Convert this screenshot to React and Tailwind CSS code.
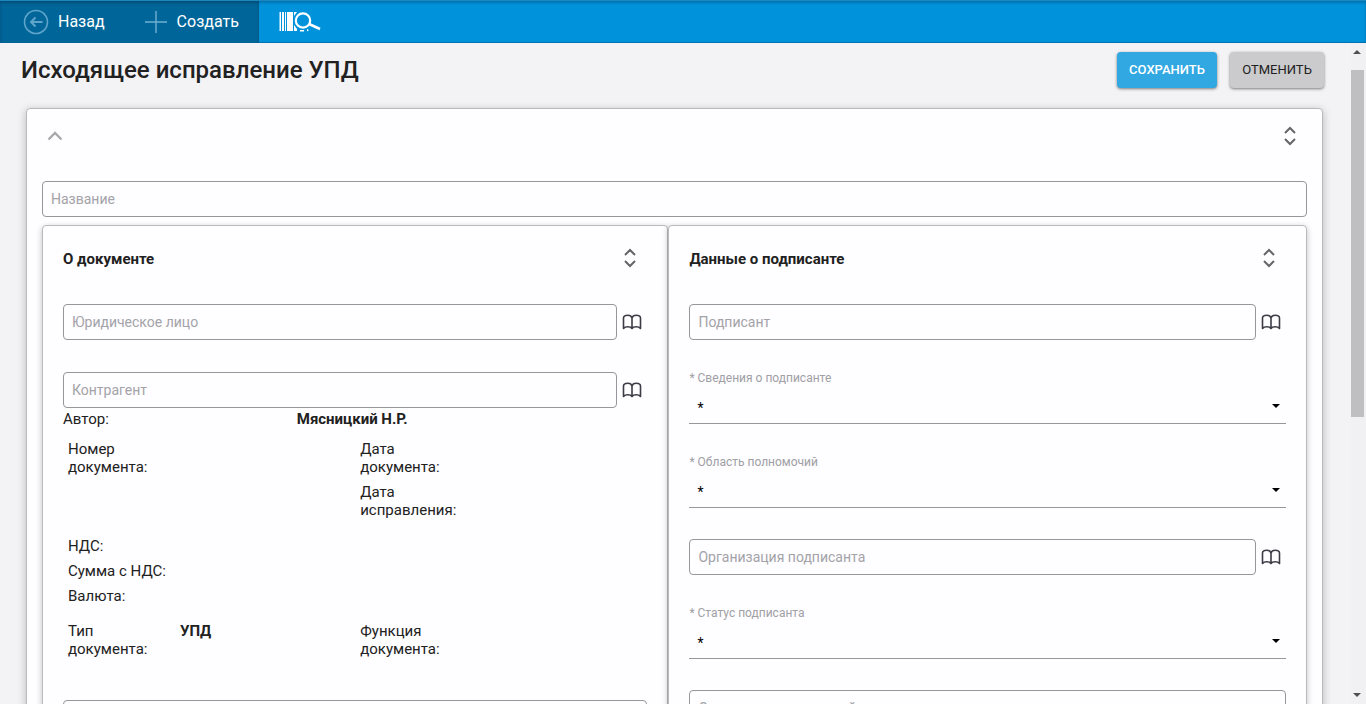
import React, { useState } from 'react';

const DETAILS = 'text-[15px] leading-[18px]';

const SELECTS = {
  info: { id: 'signer-info', label: '* Сведения о подписанте' },
  scope: { id: 'signer-scope', label: '* Область полномочий' },
  status: { id: 'signer-status', label: '* Статус подписанта' },
};

function BackIcon() {
  return (
    <svg width="26" height="26" viewBox="0 0 26 26" fill="none" stroke="#5fa5cb" aria-hidden="true">
      <circle cx="13" cy="13" r="11.5" strokeWidth="1.6" />
      <path d="M19.5 13H8M12.5 8.5 8 13l4.5 4.5" strokeWidth="2" />
    </svg>
  );
}

function PlusIcon() {
  return (
    <svg width="22" height="22" viewBox="0 0 22 22" stroke="#6fb0d2" strokeWidth="1.4" aria-hidden="true">
      <path d="M11 0v22M0 11h22" />
    </svg>
  );
}

// Barcode with a magnifier over its right side
function Logo() {
  return (
    <svg width="42" height="22" viewBox="0 0 42 22" fill="#fff" aria-hidden="true">
      <rect x="0.5" y="1" width="1.5" height="19" />
      <rect x="3" y="1" width="2" height="19" />
      <rect x="6" y="1" width="1" height="19" />
      <rect x="8" y="1" width="6" height="19" />
      <path d="M15 1h3l-3 4zM15 14l3 4v2h-3z" />
      <circle cx="24" cy="9.5" r="7.2" fill="none" stroke="#fff" strokeWidth="2.2" />
      <path d="M30 13l11 5" stroke="#fff" strokeWidth="2.6" />
      <path d="M21 19h4v1.5h-4zM28 18l2 1-2 1.500z" />
    </svg>
  );
}

function UnfoldIcon() {
  return (
    <svg width="24" height="24" viewBox="0 0 24 24" fill="none" stroke="#66666a" strokeWidth="2" aria-hidden="true">
      <path d="M7 9l5-5 5 5M7 15l5 5 5-5" />
    </svg>
  );
}

function BookIcon() {
  return (
    <svg width="20" height="16" viewBox="0 0 20 16" fill="none" stroke="#3c3c46" strokeWidth="1.6" strokeLinejoin="round" aria-hidden="true">
      <path d="M10 4C9.500 2 8 1.200 5.800 1.200S1.500 2.200 1.500 4v10.500C2.500 13.200 4 12.700 5.800 12.700S9.200 13.200 10 14.500c.8-1.300 2.400-1.800 4.200-1.800s3.300.5 4.300 1.800V4c0-1.800-2.100-2.800-4.300-2.800S10.500 2 10 4zM10 4v10" />
    </svg>
  );
}

function TextField({ label, lookup }) {
  return (
    <div className="flex items-center gap-[5px]">
      <input
        type="text"
        aria-label={label}
        placeholder={label}
        className="h-9 min-w-0 flex-1 rounded border border-[#96969b] bg-transparent px-2 text-sm text-[#212121] outline-none placeholder:text-[#a3a3a8] focus:border-[#0093dc]"
      />
      {lookup && (
        <button type="button" aria-label={`Выбрать: ${label}`} className="flex h-9 w-[25px] items-center">
          <BookIcon />
        </button>
      )}
    </div>
  );
}

function SelectField({ id, label }) {
  return (
    <div>
      <label htmlFor={id} className="block text-xs leading-4 text-[#a0a0a5]">{label}</label>
      <div className="relative mt-1">
        <select id={id} className="h-[34px] w-full appearance-none border-b border-[#96969b] bg-transparent px-2 pt-0.5 text-sm text-black outline-none">
          <option>*</option>
        </select>
        <svg width="8" height="4" viewBox="0 0 8 4" className="pointer-events-none absolute top-[14px] right-[6px]" aria-hidden="true">
          <path d="M0 0h8L4 4z" />
        </svg>
      </div>
    </div>
  );
}

function Panel({ title, className, children }) {
  return (
    <section className={`rounded border border-[#b9b9be] bg-[#fefdff] px-5 shadow-[0_2px_6px_rgba(0,0,0,0.25)] ${className}`}>
      <div className="flex h-16 items-center justify-between pr-[5px]">
        <h2 className="pt-0.5 text-[15px] font-bold">{title}</h2>
        <button type="button" aria-label={`Свернуть: ${title}`}>
          <UnfoldIcon />
        </button>
      </div>
      {children}
    </section>
  );
}

export default function App() {
  const [open, setOpen] = useState(true);

  return (
    <div className="flex h-screen flex-col overflow-hidden bg-[#f3f2f5] font-['Roboto','Liberation_Sans',sans-serif] text-[#212121]">
      <header className="flex h-[43px] shrink-0 border-t border-[#1b87bd] bg-[#0093dc] text-white shadow-[inset_0_2px_3px_rgba(0,40,80,0.3),inset_0_-1px_1px_rgba(0,40,80,0.3)]">
        <nav className="flex items-center gap-10 bg-[#006699] pr-5 pl-[23px] text-base shadow-[inset_0_2px_3px_rgba(0,30,60,0.35)]">
          <button type="button" className="flex items-center gap-[9px]">
            <BackIcon />
            Назад
          </button>
          <button type="button" className="flex items-center gap-[10px]">
            <PlusIcon />
            Создать
          </button>
        </nav>
        <a href="#" aria-label="Поиск по штрихкоду" className="flex items-center px-5">
          <Logo />
        </a>
      </header>

      <div className="flex min-h-0 flex-1">
        <main className="min-w-0 flex-1 overflow-hidden pr-7 pl-[26px]">
          <div className="-mr-px -ml-[5px] flex h-[65px] items-start justify-between">
            <h1 className="pt-[11px] text-2xl leading-8 font-medium">Исходящее исправление УПД</h1>
            <div className="flex gap-[13px] pt-[9px] text-[13px]">
              <button type="button" className="h-9 w-[100px] rounded bg-[#31a8e2] font-medium text-white shadow-[0_1px_3px_rgba(0,0,0,0.5)]">
                СОХРАНИТЬ
              </button>
              <button type="button" className="h-9 w-[94px] rounded bg-[#cbcacc] text-[#212121] shadow-[0_1px_3px_rgba(0,0,0,0.5)]">
                ОТМЕНИТЬ
              </button>
            </div>
          </div>

          <div className="rounded border border-[#b9b9be] bg-[#fefdff] px-[15px] pb-6 shadow-[0_2px_8px_rgba(0,0,0,0.25)]">
            <div className="flex h-[54px] items-center justify-between pr-[5px] pl-px">
              <button type="button" aria-label="Свернуть раздел" onClick={() => setOpen(!open)}>
                <svg width="24" height="24" viewBox="0 0 24 24" fill="none" stroke="#a9a9ad" strokeWidth="2.4" aria-hidden="true">
                  <path d="m5.500 15.500 6.500-6.500 6.500 6.500" />
                </svg>
              </button>
              <button type="button" aria-label="Развернуть все">
                <UnfoldIcon />
              </button>
            </div>

            {open && (
              <>
                <div className="mt-[18px] mb-2">
                  <TextField label="Название" />
                </div>
                <div className="flex">
                  <Panel title="О документе" className="min-w-0 flex-[48]">
                    <div className="mt-[14px] flex flex-col gap-8">
                      <TextField label="Юридическое лицо" lookup />
                      <TextField label="Контрагент" lookup />
                    </div>
                    <dl className={`mt-0.5 grid grid-cols-[2fr_3fr] ${DETAILS}`}>
                      <dt>Автор:</dt>
                      <dd className="font-bold">Мясницкий Н.Р.</dd>
                    </dl>
                    <div className={`mt-3 grid grid-cols-2 gap-y-[7px] ${DETAILS}`}>
                      <p className="w-[101px] pl-[5px]">Номер документа:</p>
                      <p className="w-[101px] pl-[5px]">Дата документа:</p>
                      <p className="col-start-2 w-[105px] pl-[5px]">Дата исправления:</p>
                    </div>
                    <div className={`mt-[18px] flex flex-col gap-[7px] px-[5px] ${DETAILS}`}>
                      <p>НДС:</p>
                      <p>Сумма с НДС:</p>
                      <p>Валюта:</p>
                    </div>
                    <div className={`mt-[17px] grid grid-cols-2 ${DETAILS}`}>
                      <dl className="flex gap-4 pl-[5px]">
                        <dt className="w-24">Тип документа:</dt>
                        <dd className="font-bold">УПД</dd>
                      </dl>
                      <p className="w-[101px] pl-[5px]">Функция документа:</p>
                    </div>
                    <div className="mt-[42px] pb-6">
                      <TextField label="Комментарий" />
                    </div>
                  </Panel>

                  <Panel title="Данные о подписанте" className="min-w-0 flex-[49]">
                    <div className="mt-[14px] flex flex-col gap-[31px] pb-6">
                      <div className="flex flex-col gap-[30px]">
                        <TextField label="Подписант" lookup />
                        <SelectField {...SELECTS.info} />
                        <SelectField {...SELECTS.scope} />
                      </div>
                      <div className="flex flex-col gap-[30px]">
                        <TextField label="Организация подписанта" lookup />
                        <SelectField {...SELECTS.status} />
                      </div>
                      <TextField label="Основание полномочий подписанта" />
                    </div>
                  </Panel>
                </div>
              </>
            )}
          </div>
        </main>

        {/* Scroll track */}
        <div className="flex w-[15px] shrink-0 flex-col bg-[#f1f0f2]" aria-hidden="true">
          <svg width="12" height="27" viewBox="0 0 12 27" fill="#505050"><path d="M2 11h8L6 7z" /></svg>
          <div className="w-[13px] flex-[347] bg-[#bfbfc1]" />
          <div className="flex-[270]" />
          <svg width="12" height="17" viewBox="0 0 12 17" fill="#505050"><path d="M2 6h8l-4 4z" /></svg>
        </div>
      </div>
    </div>
  );
}
